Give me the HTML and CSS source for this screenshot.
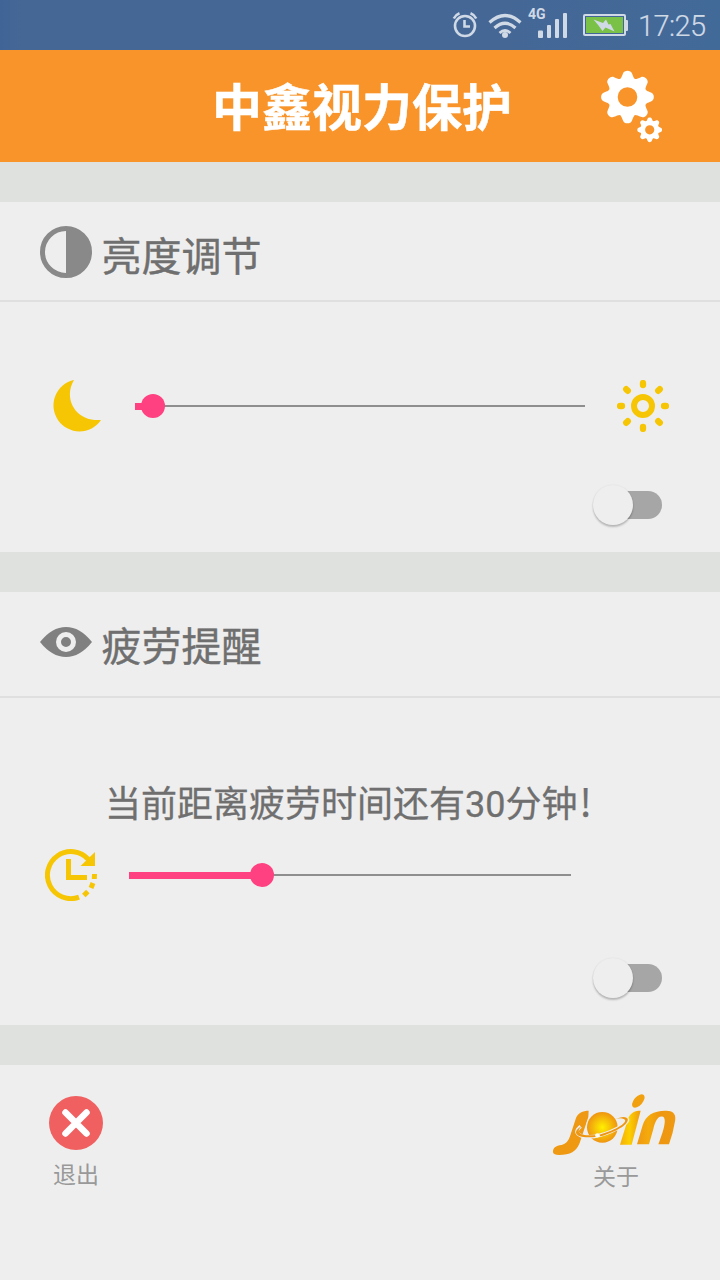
FILE: index.html
```html
<!DOCTYPE html>
<html lang="zh-CN">
<head>
<meta charset="utf-8">
<title>中鑫视力保护</title>
<link rel="stylesheet" href="styles.css">
</head>
<body>
<div class="status">
  <svg class="status-icons" viewBox="0 0 180 50" fill="none" stroke="#d0d9e6">
    <g stroke-width="2.6">
      <circle cx="15" cy="26" r="10"/>
      <path d="M14.500 20v6.500h5.500"/>
      <path d="M3.800 18.500C5 16 7 14.300 9.500 13.300M26.200 18.500C25 16 23 14.300 20.500 13.300"/>
    </g>
    <g stroke-width="3.200">
      <path d="M39.500 22.500Q55 8.500 70.500 22.500"/>
      <path d="M44.500 28Q55 18.500 65.500 28"/>
      <path d="M49.500 33Q55 28 60.500 33" stroke-width="2.800"/>
    </g>
    <g fill="#d0d9e6" stroke="none">
      <circle cx="55" cy="35" r="3"/>
      <rect x="88" y="30.500" width="5" height="7.500" rx="1"/>
      <rect x="97" y="25" width="4" height="13" rx="1"/>
      <rect x="105" y="19" width="4" height="19" rx="1"/>
      <rect x="113" y="13" width="4" height="25" rx="1"/>
      <rect x="133" y="14" width="43" height="22" rx="2"/>
      <rect x="175" y="20" width="3" height="11" rx="1"/>
    </g>
    <rect x="135.500" y="16.500" width="38" height="17" fill="#79c147" stroke="#426697" stroke-width="1"/>
    <path d="M143.500 19.500L153 23L156 19.500L158.500 24.500L160.500 24L164.500 31.500L155.500 27.500L152.500 31L148.500 25.500Z" fill="#d0d9e6" stroke="none"/>
  </svg>
  <span class="network">4G</span>
  <span class="time">17:25</span>
</div>

<header class="header">
  <h1 class="title">中鑫视力保护</h1>
  <svg class="gears" viewBox="0 0 64 74">
    <defs>
      <path id="tooth" d="M-10-16C-6-18.500-6-20-4.500-23.500C-3.500-27.300 3.500-27.300 4.500-23.500C6-20 6-18.500 10-16Z"/>
      <g id="gear">
        <circle r="14.400" fill="none" stroke="#fff" stroke-width="9.200"/>
        <use href="#tooth"/>
        <use href="#tooth" transform="rotate(45)"/>
        <use href="#tooth" transform="rotate(90)"/>
        <use href="#tooth" transform="rotate(135)"/>
        <use href="#tooth" transform="rotate(180)"/>
        <use href="#tooth" transform="rotate(225)"/>
        <use href="#tooth" transform="rotate(270)"/>
        <use href="#tooth" transform="rotate(315)"/>
      </g>
    </defs>
    <g fill="#fff">
      <use href="#gear" transform="translate(27.500 27)"/>
      <use href="#gear" transform="translate(49.700 59.800) scale(.47)"/>
    </g>
  </svg>
</header>

<main>
  <section class="card brightness">
    <div class="card-head">
      <svg class="head-icon" viewBox="0 0 52 52">
        <circle cx="26" cy="26" r="23.500" fill="none" stroke="#898989" stroke-width="5"/>
        <path d="M26 2a24 24 0 0 1 0 48z" fill="#898989"/>
      </svg>
      <h2 class="card-title">亮度调节</h2>
    </div>
    <div class="slider-row">
      <svg class="row-icon" viewBox="0 0 52 52">
        <path d="M21 0C10 18 22 42 48 40A26 26 0 1 1 21 0Z" fill="#f6c604"/>
      </svg>
      <div class="slider"><div class="slider-fill"></div><div class="slider-thumb"></div></div>
      <svg class="row-icon" viewBox="0 0 52 52" fill="none" stroke="#f6c604">
        <circle cx="26" cy="26" r="9" stroke-width="6"/>
        <path d="M26 3v2M26 47v2M3 26h2M47 26h2M9.200 9.200l1.600 1.600M41.200 41.200l1.600 1.600M9.200 42.800l1.600-1.600M41.200 10.800l1.600-1.600" stroke-width="6.300" stroke-linecap="round"/>
      </svg>
    </div>
    <div class="switch"></div>
  </section>

  <section class="card fatigue">
    <div class="card-head">
      <svg class="head-icon" viewBox="0 0 52 52">
        <path d="M0 26Q12 11 26 11T52 26Q40 41 26 41T0 26Z" fill="#808080"/>
        <circle cx="26" cy="26" r="7.500" fill="#808080" stroke="#eee" stroke-width="5"/>
      </svg>
      <h2 class="card-title">疲劳提醒</h2>
    </div>
    <p class="message">当前距离疲劳时间还有30分钟<span class="mark">!</span></p>
    <div class="slider-row">
      <svg class="row-icon" viewBox="0 0 52 52" fill="none" stroke="#f6c604" stroke-width="5">
        <path d="M34 48.200A23.500 23.500 0 1 1 43.500 10.500"/>
        <path d="M50 3v14H35.500z" fill="#f6c604" stroke="none"/>
        <path d="M23.500 10v18.500H42"/>
        <path d="M49.500 25l-.2 5M48 34l-2 5M42.800 42.500l-4 4"/>
      </svg>
      <div class="slider"><div class="slider-fill"></div><div class="slider-thumb"></div></div>
    </div>
    <div class="switch"></div>
  </section>
</main>

<footer class="footer">
  <div class="action exit">
    <svg class="exit-icon" viewBox="0 0 54 54">
      <circle cx="27" cy="27" r="27" fill="#f06060"/>
      <path d="M16.500 16.500l21 21M37.500 16.500l-21 21" stroke="#fff" stroke-width="6.500" stroke-linecap="round"/>
    </svg>
    <span class="action-label">退出</span>
  </div>
  <div class="action about">
    <svg class="logo" viewBox="36 24 378 192">
      <defs>
        <radialGradient id="ball"><stop offset="0" stop-color="#fff000"/><stop offset="1" stop-color="#ef9510"/></radialGradient>
        <linearGradient id="stem" x1="0" y1="0" x2="1" y2="0"><stop offset="0" stop-color="#f5ad0a"/><stop offset=".45" stop-color="#fcd000"/><stop offset="1" stop-color="#ef9a12"/></linearGradient>
        <linearGradient id="arch"><stop offset="0" stop-color="#ef9812"/><stop offset=".3" stop-color="#f5aa0c"/><stop offset=".6" stop-color="#ee9611"/><stop offset="1" stop-color="#ef9a12"/></linearGradient>
      </defs>
      <path d="M146 77C128 77 114 83 108 99L91 151Q84 176 65 180C47 181 38 190 39 202Q41 210 57 210C91 210 109 200 119 174L145 96Z" fill="#ef9812"/>
      <circle cx="187" cy="127" r="49" fill="#eee"/>
      <circle cx="187" cy="127" r="46" fill="url(#ball)"/>
      <path d="M240 179L265 98C273 82 285 77 302 77L275 179Z" fill="url(#stem)"/>
      <path d="M122 124C88 151 139 163 182 150C225 138 278 109 258 99" fill="none" stroke="#eee" stroke-width="11"/>
      <path d="M127 122C105 139 116 155 170 150L172 155C105 164 92 140 127 122ZM178 149C228 136 270 109 251 102Q243 98 228 102Q255 90 263 101C268 119 223 142 181 154Z" fill="#ef9610"/>
      <circle cx="172" cy="151" r="6.500" fill="#fffce9"/>
      <ellipse cx="295" cy="48" rx="24" ry="13" transform="rotate(-48 295 48)" fill="#f1a00f"/>
      <path d="M291 178L308 121C316 91 341 77 376 77C403 76 409 91 405 109Q400 142 387 178H355C369 142 382 102 369 95C351 90 344 116 340 132L327 178Z" fill="url(#arch)"/>
    </svg>
    <span class="action-label">关于</span>
  </div>
</footer>
</body>
</html>
```

FILE: styles.css
```css
* { box-sizing: border-box; }

body {
  margin: 0;
  width: 720px;
  height: 1280px;
  overflow: hidden;
  background: #eee;
  color: #6f6f6f;
  font-family: Roboto, "Noto Sans CJK SC", sans-serif;
}

svg { display: block; flex: none; }
h1, h2, p { margin: 0; }

.status {
  position: relative;
  display: flex;
  height: 50px;
  padding-left: 450px;
  background: linear-gradient(90deg, #406496, #446796 3%, #446796 70%, #426a98);
  color: #d0d9e6;
}

.status-icons { width: 180px; height: 50px; }

.network {
  position: absolute;
  left: 528px;
  top: 6px;
  font-size: 14px;
  line-height: 16px;
  font-weight: 700;
}

.time {
  margin-left: 8px;
  font-size: 29px;
  line-height: 53px;
  letter-spacing: -.6px;
  font-weight: 300;
  -webkit-text-stroke: .2px;
  white-space: nowrap;
}

.header {
  display: flex;
  align-items: flex-start;
  height: 112px;
  padding: 20px 0 0 212px;
  background: #f8942a;
}

.title {
  width: 300px;
  margin-right: 88px;
  color: #fff;
  font-size: 50px;
  line-height: 78px;
  font-weight: 700;
  -webkit-text-stroke: .5px;
  white-space: nowrap;
}

.gears { width: 64px; height: 74px; }

.card { border-top: 40px solid #dfe1de; }
.brightness { height: 390px; }
.fatigue { height: 473px; }

.card-head {
  display: flex;
  gap: 9.5px;
  height: 100px;
  padding: 24px 40px 0;
  border-bottom: 2px solid #dfdfdf;
}

.fatigue .card-head { height: 106px; }
.head-icon { width: 52px; height: 52px; }

.card-title {
  font-size: 40px;
  line-height: 64px;
  font-weight: 400;
  -webkit-text-stroke: .4px;
}

.slider-row {
  display: flex;
  align-items: center;
  height: 52px;
}

.brightness .slider-row {
  gap: 32px;
  margin-top: 78px;
  padding: 0 51px 0 53px;
}

.fatigue .slider-row {
  gap: 32px;
  margin-top: 21px;
  padding: 0 149px 0 45px;
}

.row-icon { width: 52px; height: 52px; }

.slider {
  display: flex;
  align-items: center;
  flex: 1;
  height: 24px;
  background: linear-gradient(#8e8e8e, #8e8e8e) center / 100% 2px no-repeat;
}

.brightness .slider { margin-left: -2px; }
.slider-fill { height: 7px; background: #ff4081; }
.brightness .slider-fill { width: 8px; }
.fatigue .slider-fill { width: 123px; }

.slider-thumb {
  width: 24px;
  height: 24px;
  margin-left: -2px;
  border-radius: 50%;
  background: #ff4081;
}

.switch {
  display: flex;
  align-items: center;
  width: 62px;
  height: 28px;
  margin-left: 600px;
  border-radius: 14px;
  background: #a6a6a6;
}

.brightness .switch { margin-top: 59px; }
.fatigue .switch { margin-top: 63px; }

.switch::before {
  content: "";
  flex: none;
  width: 40px;
  height: 40px;
  margin-left: -7px;
  border-radius: 50%;
  background: #eee;
  box-shadow: 0 2px 2px rgba(0, 0, 0, .22), 0 0 2px rgba(0, 0, 0, .08);
}

.message {
  margin: 81px 0 0 105px;
  height: 49px;
  font-size: 36px;
  line-height: 52px;
  -webkit-text-stroke: .3px;
  white-space: nowrap;
}

.mark {
  margin-left: 2px;
  font-family: "Noto Sans CJK SC", sans-serif;
  font-size: 38px;
  line-height: 1;
}

.footer {
  display: flex;
  justify-content: space-between;
  height: 255px;
  padding: 28px 42px 0 49px;
  border-top: 40px solid #dfe1de;
}

.action {
  display: flex;
  flex-direction: column;
  align-items: center;
  color: #999;
  font-size: 23px;
  line-height: 34px;
}

.exit-icon {
  width: 54px;
  height: 54px;
  margin: 3px 0 9px;
}

.logo {
  width: 126px;
  height: 64px;
  margin-bottom: 4px;
}

.about .action-label { padding-left: 2px; }
```
